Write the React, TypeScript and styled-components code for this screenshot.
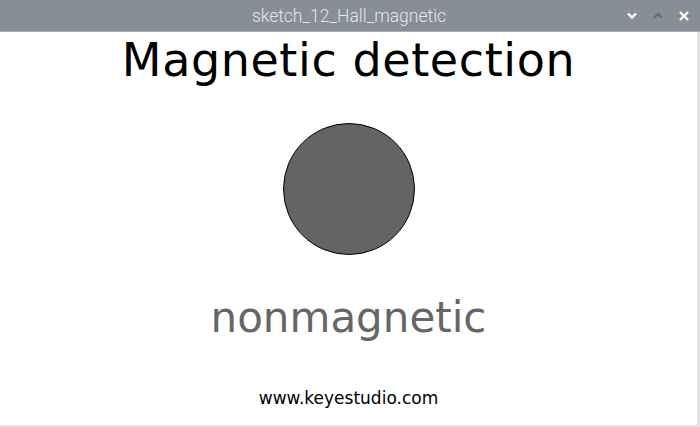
import React from "react";
import styled, { createGlobalStyle } from "styled-components";

const Global = createGlobalStyle`
  html, body { margin: 0; padding: 0; background: #ffffff; }
  body { width: 700px; height: 427px; overflow: hidden; }
`;

const Window = styled.div`
  width: 700px;
  height: 427px;
  display: flex;
  flex-direction: column;
  background: #ffffff;
  box-sizing: border-box;
`;

const TitleBar = styled.div`
  height: 31px;
  flex: none;
  background: #878e97;
  border-bottom: 1px solid #a9aeb4;
  position: relative;
  display: flex;
  align-items: center;
  justify-content: center;
`;

const TitleText = styled.span`
  font-family: Roboto, "Liberation Sans", sans-serif;
  font-weight: 300;
  font-size: 17.5px;
  color: #e4e6e9;
  margin-left: -2px;
`;

const Controls = styled.div`
  position: absolute;
  right: 10px;
  top: 0;
  height: 31px;
  display: flex;
  align-items: center;
  gap: 14px;
`;

const Body = styled.div`
  flex: 1;
  display: flex;
  flex-direction: column;
  align-items: center;
  border-right: 3px solid #e2e2e2;
  border-bottom: 2px solid #e2e2e2;
  box-sizing: border-box;
`;

const Heading = styled.div`
  font-family: "DejaVu Sans", sans-serif;
  font-size: 46px;
  color: #000;
  letter-spacing: 0.6px;
  line-height: 1;
  margin-top: 5px;
`;

const Dot = styled.div`
  width: 130px;
  height: 130px;
  border-radius: 50%;
  background: #646464;
  border: 1px solid #000;
  margin-top: 40px;
`;

const Status = styled.div`
  font-family: "DejaVu Sans", sans-serif;
  font-size: 42px;
  color: #666666;
  line-height: 1;
  margin-top: 42px;
  letter-spacing: 0px;
`;

const Site = styled.div`
  font-family: "DejaVu Sans", sans-serif;
  font-size: 17px;
  color: #000;
  line-height: 1;
  margin-top: 51px;
`;

const Icon = ({ kind }: { kind: "down" | "up" | "close" }) => {
  if (kind === "down")
    return (
      <svg width="12" height="9" viewBox="0 0 12 9">
        <path d="M2 2.5 L6 6.5 L10 2.5" stroke="#ffffff" strokeWidth="2.4" fill="none" />
      </svg>
    );
  if (kind === "up")
    return (
      <svg width="12" height="9" viewBox="0 0 12 9">
        <path d="M2 7 L6 3 L10 7" stroke="#6a7078" strokeWidth="2.4" fill="none" />
      </svg>
    );
  return (
    <svg width="12" height="12" viewBox="0 0 12 12">
      <path d="M2 2 L10 10 M10 2 L2 10" stroke="#ffffff" strokeWidth="2.4" fill="none" />
    </svg>
  );
};

export default function App() {
  return (
    <>
      <Global />
      <Window>
        <TitleBar>
          <TitleText>sketch_12_Hall_magnetic</TitleText>
          <Controls>
            <Icon kind="down" />
            <Icon kind="up" />
            <Icon kind="close" />
          </Controls>
        </TitleBar>
        <Body>
          <Heading>Magnetic detection</Heading>
          <Dot />
          <Status>nonmagnetic</Status>
          <Site>www.keyestudio.com</Site>
        </Body>
      </Window>
    </>
  );
}
